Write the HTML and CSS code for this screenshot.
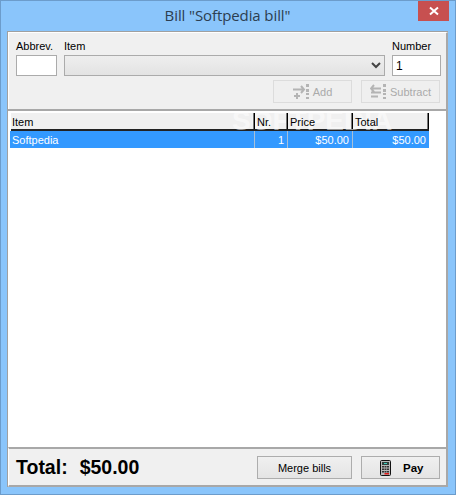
FILE: index.html
```html
<!DOCTYPE html>
<html lang="en">
<head>
<meta charset="utf-8">
<title>Bill</title>
<link rel="stylesheet" href="styles.css">
</head>
<body>
<div class="window">
  <header class="titlebar">
    <span class="title">Bill "Softpedia bill"</span>
    <button class="close" aria-label="Close">
      <svg width="10" height="10" viewBox="0 0 10 10"><path d="M1 1.500 9 8.500M9 1.500 1 8.500" stroke="#fff" stroke-width="2"/></svg>
    </button>
  </header>
  <div class="client">
    <section class="entry">
      <div class="fields">
        <label class="field abbrev"><span>Abbrev.</span><input class="input" type="text"></label>
        <label class="field item"><span>Item</span>
          <div class="select">
            <svg width="10" height="7" viewBox="0 0 10 7"><path d="M1 1 5 5 9 1" fill="none" stroke="#444" stroke-width="2"/></svg>
          </div>
        </label>
        <label class="field number"><span>Number</span><input class="input" type="text" value="1"></label>
      </div>
      <div class="actions">
        <button class="btn disabled">
          <svg width="16" height="15" viewBox="0 0 16 15"><path d="M0 5.500H11M8 2 11 5.500 8 9M4 9V15M1 12H7" fill="none" stroke="#b4b4b4" stroke-width="2"/><path d="M13 0h3v3h-3zM13 5h3v3h-3zM13 9h3v2h-3zM13 13h3v2h-3z" fill="#b4b4b4"/></svg>
          <span>Add</span>
        </button>
        <button class="btn disabled">
          <svg width="16" height="15" viewBox="0 0 16 15"><path d="M1 4.500H11M4 1 1 4.500 4 8M1 8.500H11M1 12.500H8" fill="none" stroke="#b4b4b4" stroke-width="2"/><path d="M13 0h3v3h-3zM13 5h3v3h-3zM13 9h3v2h-3zM13 13h3v2h-3z" fill="#b4b4b4"/></svg>
          <span>Subtract</span>
        </button>
      </div>
    </section>
    <section class="list">
      <div class="row head">
        <div class="c c1">Item</div><div class="c c2">Nr.</div><div class="c c3">Price</div><div class="c c4">Total</div>
      </div>
      <div class="row sel">
        <div class="c c1">Softpedia</div><div class="c c2 r">1</div><div class="c c3 r">$50.00</div><div class="c c4 r">$50.00</div>
      </div>
      <div class="watermark">SOFTPEDIA</div>
    </section>
    <footer class="foot">
      <div class="total"><span>Total:</span><span>$50.00</span></div>
      <div class="foot-actions">
        <button class="btn merge">Merge bills</button>
        <button class="btn pay">
          <svg width="11" height="16" viewBox="0 0 11 16"><rect x=".5" y=".5" width="10" height="15" rx="1" fill="#b9b9b9" stroke="#111"/><rect x="2" y="2" width="7" height="3" fill="#30403c"/><rect x="4" y="3" width="3" height="1" fill="#3fd0c0"/><path d="M2 6h2v1.500H2zM4.500 6h2v1.500h-2zM7 6h2v1.500H7zM2 8.500h2V10H2zM4.500 8.500h2V10h-2zM7 8.500h2V10H7zM2 11h2v1.500H2zM4.500 11h2v1.500h-2zM7 11h2v1.500H7z" fill="#333"/><rect x="4.500" y="13" width="4.500" height="1.500" fill="#e01818"/></svg>
          <span>Pay</span>
        </button>
      </div>
    </footer>
  </div>
</div>
</body>
</html>
```
FILE: styles.css
```css
* { box-sizing: border-box; }
html, body { margin: 0; padding: 0; }
body { width: 456px; height: 495px; overflow: hidden; font-family: "Liberation Sans", Arial, sans-serif; font-size: 11px; color: #000; }
.window { width: 456px; height: 495px; background: #8ac5fb; border: 1px solid #6c9ccb; display: flex; flex-direction: column; padding: 0 7px 7px 6px; }
.titlebar { height: 30px; flex: none; display: flex; justify-content: center; align-items: center; position: relative; }
.title { font-family: "Open Sans", "Noto Sans", sans-serif; font-size: 15px; letter-spacing: -0.1px; color: #2c3e50; padding-bottom: 2px; }
.close { position: absolute; top: 0; right: -1px; width: 31px; height: 20px; border: 0; padding: 0; background: #c75050; display: flex; align-items: center; justify-content: center; }
.client { flex: 1; display: flex; flex-direction: column; background: #fff; border-left: 1px solid #a0a0a0; border-top: 1px solid #a0a0a0; min-height: 0; }
.entry { height: 77px; flex: none; background: #f0f0f0; border: 1px solid #fff; border-bottom: 0; border-right: 2px solid #a8a8a8; box-shadow: 0 2px 0 #a8a8a8; padding: 7px 6px 0 7px; }
.fields { display: flex; gap: 7px; }
.field { display: flex; flex-direction: column; gap: 2px; flex: none; }
.field span { line-height: 13px; height: 13px; }
.abbrev { width: 41px; }
.item { width: 321px; }
.number { width: 49px; }
.input { width: 100%; height: 21px; border: 1px solid #ababab; background: #fff; font: 12px "Liberation Sans", Arial, sans-serif; padding: 0 3px; outline: 0; }
.select { height: 21px; border: 1px solid #ababab; background: linear-gradient(#eeeeee, #e3e3e3); display: flex; justify-content: flex-end; align-items: center; padding-right: 3px; }
.actions { display: flex; justify-content: flex-end; gap: 9px; margin-top: 4px; }
.btn { font: 11px "Liberation Sans", Arial, sans-serif; background: #efefef; display: flex; align-items: center; justify-content: center; padding: 0; }
.disabled { width: 79px; height: 23px; border: 1px solid #dcdcdc; color: #aaa; gap: 4px; }
.list { flex: 1; position: relative; background: #fff; min-height: 0; margin-top: 2px; padding: 2px 0 0 2px; border-right: 2px solid #a8a8a8; }
.row { display: flex; width: 419px; }
.c { padding: 1px 2px 0; white-space: nowrap; flex: none; }
.c1 { width: 245px; }
.c2 { width: 33px; }
.c3 { width: 65px; }
.c4 { width: 76px; }
.r { text-align: right; }
.head { background: #f0f0f0; height: 18px; border-bottom: 2px solid #222; margin-left: 1px; width: 418px; }
.head .c { position: relative; z-index: 1; border-right: 1px solid #000; box-shadow: inset -1px 0 0 #777; padding-left: 2px; line-height: 17px; }
.head .c1 { width: 244px; padding-left: 1px; }
.sel { background: #3399ff; color: #fff; height: 17px; }
.sel .c { line-height: 17px; border-right: 1px solid #a8c0d8; padding-right: 3px; }
.sel .c4 { border-right: 0; }
.watermark { position: absolute; left: 224px; top: -4px; font: bold 28px "Liberation Sans", Arial, sans-serif; line-height: 28px; color: rgba(255,255,255,.55); pointer-events: none; }
.foot { height: 40px; flex: none; background: #f0f0f0; border-top: 2px solid #a8a8a8; border-left: 1px solid #fff; border-right: 2px solid #a8a8a8; border-bottom: 2px solid #a8a8a8; display: flex; justify-content: space-between; align-items: center; padding: 1px 6px 0 7px; }
.total { font-size: 19.500px; font-weight: bold; display: flex; gap: 12px; }
.foot-actions { display: flex; gap: 9px; }
.merge, .pay { height: 23px; border: 1px solid #adadad; background: linear-gradient(#f0f0f0, #e4e4e4); }
.merge { width: 95px; }
.pay { width: 79px; gap: 12px; font-weight: bold; font-size: 11.500px; justify-content: flex-start; padding-left: 18px; }
```
